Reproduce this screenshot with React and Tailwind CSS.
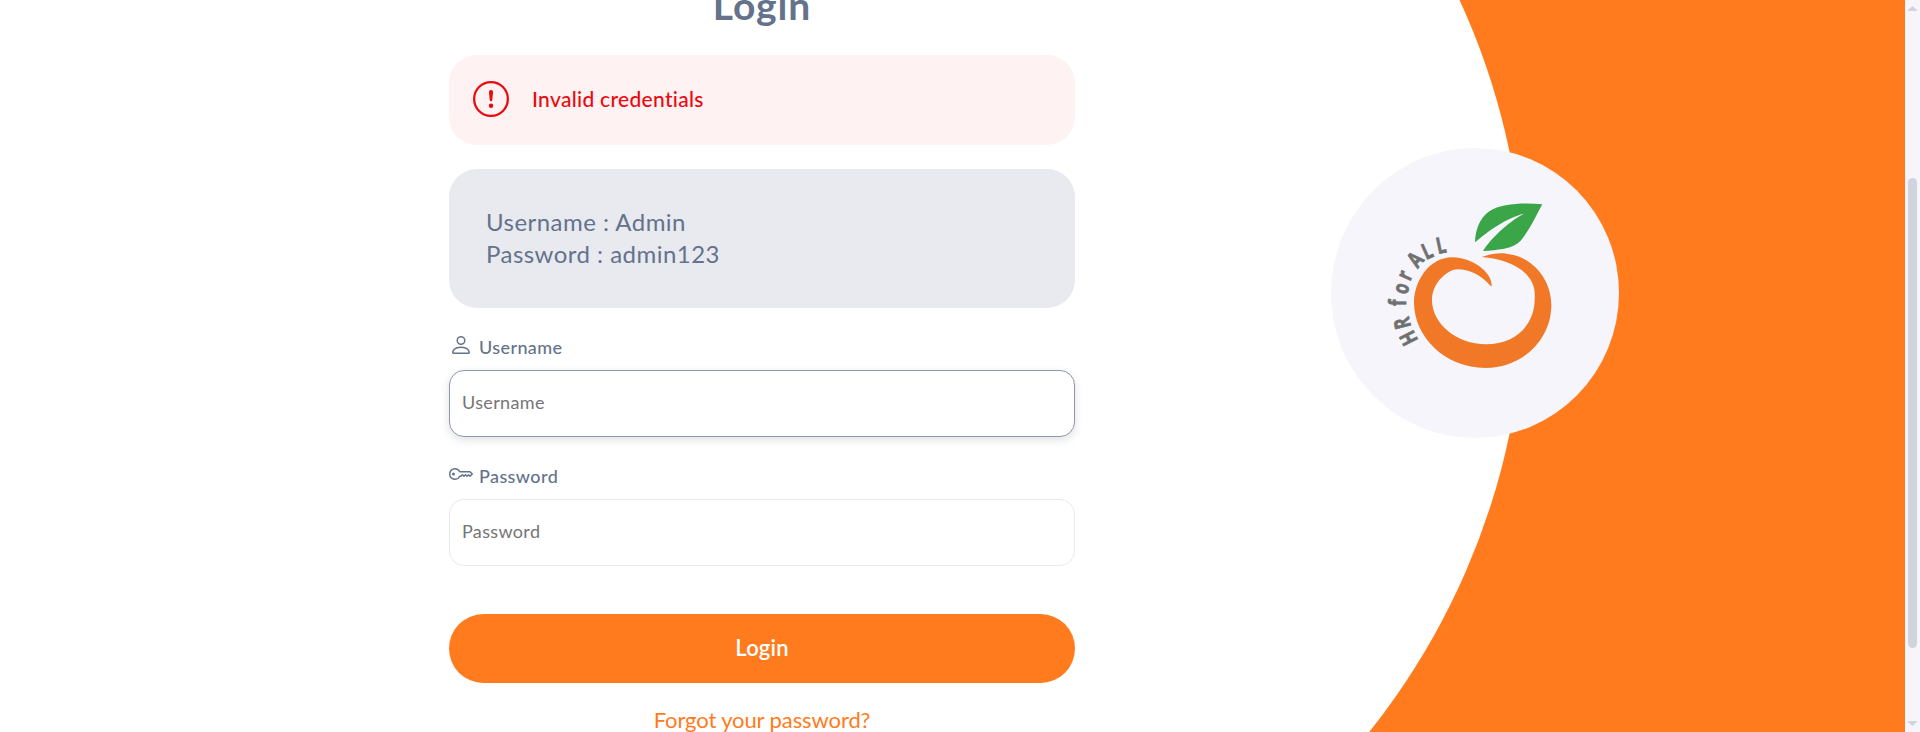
import { BsPerson, BsKey, BsExclamationCircle } from "react-icons/bs";

const motto = [
  ["H", 287, 583, -117],
  ["R", 270, 543, -104],
  ["f", 259, 487, -90],
  ["o", 265, 450, -75],
  ["r", 275, 414, -66],
  ["A", 304, 373, -50],
  ["L", 331, 353, -24],
  ["L", 368, 338, -12],
];

function Logo() {
  return (
    <svg className="h-[290px] w-[288px]" viewBox="33 23 864 870" preserveAspectRatio="none">
      <path fill="#3aa648" d="M465 306C466 274 476 235 508 213C545 189 610 187 667 192C650 222 630 268 602 301C580 326 530 329 489 332C508 300 560 247 612 220C560 232 500 275 465 306Z" />
      <path fill="#f07826" d="M485 350C510 341 535 337 560 340C640 349 694 420 694 494C694 600 605 683 497 683C375 683 282 590 282 486C282 430 322 351 398 351C455 351 517 395 515 437Q513 439 510 435C482 403 446 387 413 387C385 387 336 425 336 480C336 550 410 612 498 612C590 612 645 550 644 475C646 445 640 425 620 403C590 371 540 354 485 350Z" />
      <g className="font-['Open_Sans',sans-serif]" fontSize="67" fontWeight="700" fill="#6f7070" stroke="#6f7070" strokeWidth="2" textAnchor="middle">
        {motto.map(([char, x, y, angle], i) => (
          <text key={i} transform={`translate(${x} ${y}) rotate(${angle}) scale(0.75 1)`}>{char}</text>
        ))}
      </g>
    </svg>
  );
}

function Field({ icon: Icon, label, type, active }) {
  return (
    <div className="mt-[25px] shrink-0">
      <label className="flex h-[37px] items-start gap-[6px] text-[18px] leading-[26px] text-[#64728c]">
        <Icon size={24} className="shrink-0" />
        <span className="pt-px font-medium tracking-[0.4px]">{label}</span>
      </label>
      <input
        type={type}
        placeholder={label}
        className={
          "block h-[67px] w-full rounded-[15px] border bg-white px-3 pb-[3px] text-[18px] tracking-[0.35px] outline-none placeholder:text-[#757575] " +
          (active ? "border-[#8d97ad] shadow-[0_3px_10px_rgba(0,0,0,0.12)]" : "border-[#e8eaef]")
        }
      />
    </div>
  );
}

function Scrollbar() {
  return (
    <div className="flex w-[15px] shrink-0 flex-col items-center bg-[#f6f5fb] py-[6px]">
      <svg className="h-[5px] w-[9px]" viewBox="0 0 9 5"><path fill="#cfd4df" d="M4.5 0L9 4V5H0V4Z" /></svg>
      <div className="mt-[167px] h-[470px] w-[9px] rounded-full bg-[#cfd4df]" />
      <svg className="mt-auto h-[5px] w-[9px]" viewBox="0 0 9 5"><path fill="#cfd4df" d="M4.5 5L9 1V0H0V1Z" /></svg>
    </div>
  );
}

export default function App() {
  return (
    <div className="flex h-[732px] w-[1920px] overflow-hidden bg-white font-['Lato',sans-serif] [font-variant-ligatures:none]">
      <div className="relative flex grow overflow-hidden bg-white">
        <svg className="absolute inset-0 h-[732px] w-[1905px]" viewBox="0 0 1905 732">
          <rect x="762" width="1143" height="732" fill="#ff7b1d" />
          <ellipse cx="762" cy="292.8" rx="762" ry="727" fill="#fff" />
        </svg>
        <main className="relative ml-[449px] flex w-[626px] shrink-0 flex-col">
          <h1 className="-mt-[19px] h-[74px] shrink-0 text-center text-[39px] leading-[48px] font-bold tracking-[0.9px] text-[#64728c]">Login</h1>
          <div className="flex h-[90px] shrink-0 items-center gap-[23px] rounded-[28px] bg-[#fef2f2] px-6 pb-[2px] text-[#eb0910]">
            <BsExclamationCircle size={36} />
            <p className="text-[21px] font-medium tracking-[0.3px]">Invalid credentials</p>
          </div>
          <div className="mt-6 flex h-[139px] shrink-0 flex-col justify-center rounded-[28px] bg-[#e8eaef] px-[37px] pb-px text-[24px] leading-[32px] tracking-[0.47px] text-[#64728c]">
            <p>Username : Admin</p>
            <p>Password : admin123</p>
          </div>
          <Field icon={BsPerson} label="Username" type="text" active />
          <Field icon={BsKey} label="Password" type="password" />
          <button className="mt-[48px] h-[69px] shrink-0 rounded-full bg-[#ff7b1d] pb-[2px] text-[22px] font-semibold tracking-[0.2px] text-white">Login</button>
          <a className="mt-[21px] shrink-0 text-center text-[22px] leading-[32px] tracking-[-0.1px] text-[#ff7b1d]">Forgot your password?</a>
        </main>
        <div className="relative mt-[148px] ml-[256px] h-[290px] w-[288px] shrink-0 rounded-[50%] bg-[#f6f5fb]">
          <Logo />
        </div>
      </div>
      <Scrollbar />
    </div>
  );
}
